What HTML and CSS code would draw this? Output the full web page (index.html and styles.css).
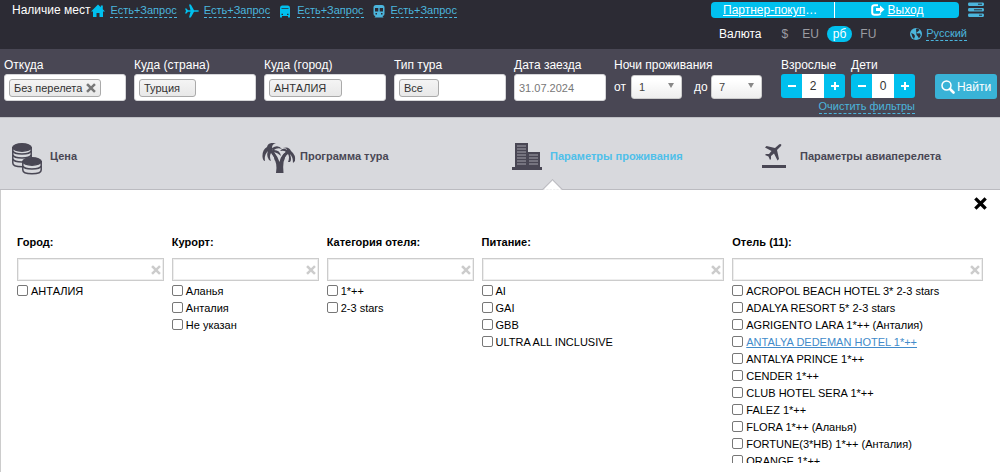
FILE: index.html
```html
<!DOCTYPE html>
<html lang="ru">
<head>
<meta charset="utf-8">
<title>Поиск тура</title>
<link rel="stylesheet" href="styles.css">
</head>
<body>
<svg class="sprite" aria-hidden="true">
  <symbol id="cross" viewBox="0 0 12 12"><path d="M2.300 2.300L9.700 9.700M9.700 2.300L2.300 9.700" fill="none" stroke="currentColor" stroke-width="3" stroke-linecap="square"/></symbol>
</svg>
<header class="topbar">
  <div class="seats">
    <span class="seats-title">Наличие мест</span>
    <span class="seat"><svg class="seat-icon bright" viewBox="0 0 14 14"><path d="M7 0.500L0 7.500H2V13H5.500V9H8.500V13H12V7.500H14L11.800 5.300V1.500H9.800V3.300Z" fill="currentColor"/></svg><a class="dashed" href="#">Есть+Запрос</a></span>
    <span class="seat"><svg class="seat-icon bright" viewBox="0 0 14 14"><path d="M0 4.500H1.500L3 6.200H5.500L4 0.500H5.800L9 6.200H12.500Q14 6.400 14 7Q14 7.600 12.500 7.800H9L5.800 13.500H4L5.500 7.800H3L1.500 9.500H0L1 7Z" fill="currentColor"/></svg><a class="dashed" href="#">Есть+Запрос</a></span>
    <span class="seat"><svg class="seat-icon bright" viewBox="0 0 14 14"><path fill-rule="evenodd" d="M4 1.500H10Q12 1.500 12 4V12.500V13.500H10V12H4V13.500H2V12.500V4Q2 1.500 4 1.500ZM3.500 4V4.800H10.500V4ZM3.500 9.700V11H5V9.700ZM9 9.700V11H10.500V9.700Z" fill="currentColor"/></svg><a class="dashed" href="#">Есть+Запрос</a></span>
    <span class="seat"><svg class="seat-icon" viewBox="0 0 14 14"><path fill-rule="evenodd" d="M4 1H10Q12.500 1 12.500 3.500V10Q12.500 12 10.500 12L11.500 13.500H2.500L3.500 12Q1.500 12 1.500 10V3.500Q1.500 1 4 1ZM3 4V7.500H6.300V4ZM7.700 4V7.500H11V4ZM3.500 9V10.500H5V9ZM9 9V10.500H10.500V9Z" fill="currentColor"/></svg><a class="dashed" href="#">Есть+Запрос</a></span>
  </div>
  <div class="account">
    <div class="account-row">
      <nav class="account-bar">
        <a class="account-link partner" href="#">Партнер-покупатель</a>
        <a class="account-link exit" href="#"><svg class="exit-icon" viewBox="0 0 14 12"><path d="M7 1.200H3.500Q1.200 1.200 1.200 3.500V8.500Q1.200 10.800 3.500 10.800H7Q9 10.800 9.500 9.500" fill="none" stroke="currentColor" stroke-width="2"/><path d="M9 1.500L13.500 5.500L9 9.500V7H5V4H9Z" fill="currentColor"/></svg><span>Выход</span></a>
      </nav>
      <button class="menu" type="button" aria-label="Меню"><svg class="menu-icon" viewBox="0 0 18 16"><path d="M2 0.500H16Q17 0.500 17 2.200T16 4H2Q1 4 1 2.200T2 0.500ZM2 6H16Q17 6 17 7.800T16 9.500H2Q1 9.500 1 7.800T2 6ZM2 11.500H16Q17 11.500 17 13.200T16 15H2Q1 15 1 13.200T2 11.500Z" fill="currentColor"/><path d="M11 2.200H15M7 7.800H15M12 13.200H15" stroke="#2c2b34" stroke-width="1"/></svg></button>
    </div>
    <div class="currency-row">
      <span>Валюта</span>
      <div class="currencies">
        <button class="currency" type="button">$</button>
        <button class="currency" type="button">EU</button>
        <button class="currency active" type="button">рб</button>
        <button class="currency" type="button">FU</button>
      </div>
      <div class="language"><svg class="globe" viewBox="0 0 12 12"><circle cx="6" cy="6" r="6" fill="currentColor"/><path d="M6 0.800L8 0.500L9.500 2L8 3.500L6.500 4.500L7.500 5.500L10 5.300L10.800 7.500L9 10.500L7.500 8L6.500 7ZM1.200 5L4 6.200L5 8L4 11L2.500 9Z" fill="#2c2b34"/></svg><a class="dashed" href="#">Русский</a></div>
    </div>
  </div>
</header>

<form class="search">
  <div class="field"><span class="label">Откуда</span><div class="box"><span class="tag">Без перелета<button class="tag-remove" type="button" aria-label="Убрать"><svg class="x-small" viewBox="0 0 12 12"><use href="#cross"/></svg></button></span></div></div>
  <div class="field"><span class="label">Куда (страна)</span><div class="box"><span class="tag fixed">Турция</span></div></div>
  <div class="field"><span class="label">Куда (город)</span><div class="box"><span class="tag fixed">АНТАЛИЯ</span></div></div>
  <div class="field type"><span class="label">Тип тура</span><div class="box"><span class="tag fixed">Все</span></div></div>
  <div class="field date"><label class="label" for="date">Дата заезда</label><input class="box date-input" id="date" type="text" value="31.07.2024"></div>
  <div class="field nights">
    <span class="label">Ночи проживания</span>
    <div class="nights-row">
      <label for="from">от</label><div class="select-wrap"><select class="select" id="from"><option>1</option></select></div>
      <label class="until" for="to">до</label><div class="select-wrap"><select class="select" id="to"><option>7</option></select></div>
    </div>
  </div>
  <div class="people">
    <div class="people-row">
      <div class="field"><label class="label" for="adults">Взрослые</label><div class="stepper"><button class="step minus" type="button" aria-label="Меньше взрослых"></button><input class="count" id="adults" type="text" value="2"><button class="step plus" type="button" aria-label="Больше взрослых"></button></div></div>
      <div class="field"><label class="label" for="kids">Дети</label><div class="stepper"><button class="step minus" type="button" aria-label="Меньше детей"></button><input class="count" id="kids" type="text" value="0"><button class="step plus" type="button" aria-label="Больше детей"></button></div></div>
    </div>
    <a class="dashed clear" href="#">Очистить фильтры</a>
  </div>
  <button class="find" type="submit"><svg class="find-icon" viewBox="0 0 14 14"><circle cx="5.500" cy="5.500" r="4.500" fill="none" stroke="currentColor" stroke-width="1.500"/><path d="M9 9L12.500 12.500" stroke="currentColor" stroke-width="2.600" stroke-linecap="round"/></svg>Найти</button>
</form>

<nav class="tabs">
  <a class="tab" href="#"><svg class="tab-icon" viewBox="0 0 34 32"><g fill="#d8d9dd" stroke="currentColor" stroke-width="1.500"><path d="M0.800 4V20C0.800 25 19.200 25 19.200 20V4"/><path d="M1 8C2 12 18 12 19 8M1 12C2 16 18 16 19 12M1 16C2 20 18 20 19 16" fill="none"/><ellipse cx="10" cy="4.500" rx="9.200" ry="3.700" fill="currentColor"/><path d="M10.800 18V27C10.800 32 29.200 32 29.200 27V18"/><path d="M11 23C12 27 28 27 29 23" fill="none"/><ellipse cx="20" cy="18.500" rx="9.200" ry="3.700" fill="currentColor"/></g></svg><span>Цена</span></a>
  <a class="tab" href="#"><svg class="tab-icon" viewBox="0 0 34 32"><g fill="currentColor"><path d="M14 30Q16 21 10 10L12 9Q16 14 17.500 19Q18.500 13 24 9L25.500 10Q20 17 21.500 30Z"/><path d="M11 8Q8 2 14 0Q6 -1 5 4Q0 7 0.500 14Q1 18 3 18Q2 12 6 8Q4 13 7 17L9 18Q7 13 9 10Q12 13 13 18Q15 14 12 9Q16 10 19 13Q18 7 12 7Q15 4 20 6Q16 1 10 5Z"/><path d="M24 9Q22 7 18 8Q21 4 25 7Q25 5 21 5Q27 3 29 8Q34 12 33 18L31 20Q31 14 28 11Q30 17 28 19L26 19Q28 14 26 11Q22 14 22 18L20 15Q20 11 24 9Z"/></g></svg><span>Программа тура</span></a>
  <a class="tab active" href="#"><svg class="tab-icon" viewBox="0 0 34 32"><path d="M3 0H16V9H28V24H30V27H0V24H3Z" fill="currentColor"/><path d="M5 3H14M5 6H14M5 9H14M5 12H14M5 15H14M5 18H14M5 21H14M17 12H26M17 15H26M17 18H26M17 21H26" stroke="#a3a2aa" stroke-width="1"/></svg><span>Параметры проживания</span></a>
  <a class="tab" href="#"><svg class="tab-icon" viewBox="0 0 34 32"><path d="M18 1Q20 1 19 3L15 7L17 16L15.500 17.500L12 10.500L9 13V16L8 17L6.500 13.500L3 12L4 11H7L9.500 8L3 4.500L4.500 3L13 5L17 1.500Z" fill="currentColor"/><path d="M0 22H24V25H0Z" fill="currentColor"/></svg><span>Параметры авиаперелета</span></a>
</nav>

<main class="panel">
  <button class="close" type="button" aria-label="Закрыть"><svg class="close-icon" viewBox="0 0 12 12"><use href="#cross"/></svg></button>
  <div class="filters">
    <section class="filter">
      <label class="filter-title" for="city">Город:</label>
      <div class="filter-box"><input class="filter-input" id="city" type="text"><button class="reset" type="button" aria-label="Очистить"><svg class="x-small" viewBox="0 0 12 12"><use href="#cross"/></svg></button></div>
      <div class="options"><label class="option"><input class="tick" type="checkbox">АНТАЛИЯ</label></div>
    </section>
    <section class="filter">
      <label class="filter-title" for="resort">Курорт:</label>
      <div class="filter-box"><input class="filter-input" id="resort" type="text"><button class="reset" type="button" aria-label="Очистить"><svg class="x-small" viewBox="0 0 12 12"><use href="#cross"/></svg></button></div>
      <div class="options">
        <label class="option"><input class="tick" type="checkbox">Аланья</label>
        <label class="option"><input class="tick" type="checkbox">Анталия</label>
        <label class="option"><input class="tick" type="checkbox">Не указан</label>
      </div>
    </section>
    <section class="filter">
      <label class="filter-title" for="category">Категория отеля:</label>
      <div class="filter-box"><input class="filter-input" id="category" type="text"><button class="reset" type="button" aria-label="Очистить"><svg class="x-small" viewBox="0 0 12 12"><use href="#cross"/></svg></button></div>
      <div class="options">
        <label class="option"><input class="tick" type="checkbox">1*++</label>
        <label class="option"><input class="tick" type="checkbox">2-3 stars</label>
      </div>
    </section>
    <section class="filter">
      <label class="filter-title" for="meal">Питание:</label>
      <div class="filter-box"><input class="filter-input" id="meal" type="text"><button class="reset" type="button" aria-label="Очистить"><svg class="x-small" viewBox="0 0 12 12"><use href="#cross"/></svg></button></div>
      <div class="options">
        <label class="option"><input class="tick" type="checkbox">AI</label>
        <label class="option"><input class="tick" type="checkbox">GAI</label>
        <label class="option"><input class="tick" type="checkbox">GBB</label>
        <label class="option"><input class="tick" type="checkbox">ULTRA ALL INCLUSIVE</label>
      </div>
    </section>
    <section class="filter">
      <label class="filter-title" for="hotel">Отель (11):</label>
      <div class="filter-box"><input class="filter-input" id="hotel" type="text"><button class="reset" type="button" aria-label="Очистить"><svg class="x-small" viewBox="0 0 12 12"><use href="#cross"/></svg></button></div>
      <div class="options hotels">
        <label class="option"><input class="tick" type="checkbox">ACROPOL BEACH HOTEL 3* 2-3 stars</label>
        <label class="option"><input class="tick" type="checkbox">ADALYA RESORT 5* 2-3 stars</label>
        <label class="option"><input class="tick" type="checkbox">AGRIGENTO LARA 1*++ (Анталия)</label>
        <div class="option"><input class="tick" type="checkbox" aria-labelledby="dedeman"><a class="hotel-link" id="dedeman" href="#">ANTALYA DEDEMAN HOTEL 1*++</a></div>
        <label class="option"><input class="tick" type="checkbox">ANTALYA PRINCE 1*++</label>
        <label class="option"><input class="tick" type="checkbox">CENDER 1*++</label>
        <label class="option"><input class="tick" type="checkbox">CLUB HOTEL SERA 1*++</label>
        <label class="option"><input class="tick" type="checkbox">FALEZ 1*++</label>
        <label class="option"><input class="tick" type="checkbox">FLORA 1*++ (Аланья)</label>
        <label class="option"><input class="tick" type="checkbox">FORTUNE(3*HB) 1*++ (Анталия)</label>
        <label class="option"><input class="tick" type="checkbox">ORANGE 1*++</label>
      </div>
    </section>
  </div>
</main>
</body>
</html>
```

FILE: styles.css
```css
* { box-sizing: border-box; }
body {
  margin: 0;
  background: #fff;
  color: #000;
  font: 11px/16px "Liberation Sans", Arial, sans-serif;
}
button, input, select { font: inherit; color: inherit; margin: 0; padding: 0; }
button { border: 0; background: none; cursor: pointer; }
svg { display: block; flex: none; }
.sprite { position: absolute; width: 0; height: 0; }

.dashed {
  color: #4bb5dc;
  font-size: 11px;
  line-height: 13px;
  text-decoration: none;
  border-bottom: 1px dashed currentColor;
}

.topbar {
  display: flex;
  justify-content: space-between;
  min-height: 49px;
  padding: 2px 15px 0 12px;
  background: #2c2b34;
  color: #fff;
  font-size: 12px;
}
.seats { display: flex; align-items: flex-start; }
.seats-title { margin-right: 1px; }
.seat { display: flex; align-items: center; gap: 5px; height: 17px; margin-right: 8px; color: #4bb5dc; }
.seat-icon { width: 14px; height: 14px; }
.bright { color: #00c0ee; }
.account { width: 274px; }
.account-row { display: flex; justify-content: space-between; align-items: center; }
.account-bar {
  display: grid;
  grid-template-columns: 1fr 1fr;
  width: 248px;
  height: 16px;
  border-radius: 4px;
  background: #00c0ee;
}
.account-link { color: #fff; min-width: 0; }
.partner { padding: 0 16px 0 12px; overflow: hidden; text-overflow: ellipsis; white-space: nowrap; border-right: 1px solid #fff; }
.exit { display: flex; align-items: center; justify-content: center; gap: 3px; }
.exit-icon { width: 14px; height: 12px; }
.menu { color: #4bb5dc; }
.menu-icon { width: 18px; height: 16px; }
.currency-row { display: flex; align-items: center; padding: 8px 18px 0 8px; }
.currencies { display: flex; gap: 2px; margin-left: 14px; }
.currency { height: 16px; padding: 0 6px; border-radius: 8px; color: #9c9ca2; }
.currency.active { background: #00c0ee; color: #fff; }
.language { display: flex; align-items: center; gap: 4px; margin-left: auto; color: #4bb5dc; }
.globe { width: 12px; height: 12px; }

.search {
  display: flex;
  align-items: flex-start;
  gap: 8px;
  min-height: 68px;
  padding: 8px 3px 0 4px;
  background: #494754;
  color: #fff;
}
.field { flex: 122 1 0; min-width: 0; }
.type { flex-grow: 112; }
.date { flex-grow: 92; }
.nights { flex-grow: 148; }
.label { display: block; height: 17px; font-size: 12px; white-space: nowrap; }
.box { display: flex; align-items: center; width: 100%; height: 27px; padding: 0 4px; border: 1px solid #d5d5d8; border-radius: 3px; background: #fff; }
.tag {
  display: flex;
  align-items: center;
  gap: 4px;
  height: 18px;
  padding: 0 4px;
  border: 1px solid #aaa;
  border-radius: 3px;
  background: linear-gradient(#f4f4f4, #e8e8e8);
  color: #333;
  white-space: nowrap;
}
.fixed { padding-right: 15px; }
.tag-remove { color: #777; }
.x-small { width: 10px; height: 10px; }
.date-input { color: #777; }
.nights-row { display: flex; align-items: center; height: 25px; font-size: 12px; }
.nights-row label { width: 17px; flex: none; }
.nights-row .until { margin-left: 12px; }
.select-wrap { position: relative; flex: 1; }
.select-wrap::after { content: ""; position: absolute; right: 8px; top: 8px; border: 3px solid transparent; border-top: 5px solid #888; border-bottom: 0; pointer-events: none; }
.select { display: block; appearance: none; width: 100%; height: 24px; padding-left: 7px; border: 1px solid #ccc; border-radius: 3px; background: linear-gradient(#fff 20%, #eee); color: #444; font-size: 11px; }
.people { display: flex; flex-direction: column; align-items: flex-end; margin-left: 11px; }
.people-row { display: flex; gap: 6px; }
.people .field { flex: none; width: 64px; }
.clear { margin-top: 2px; }
.stepper { display: grid; grid-template-columns: 1fr 22px 1fr; height: 24px; border-radius: 3px; overflow: hidden; }
.step { display: flex; align-items: center; justify-content: center; background: #00c0ee; }
.step::before { content: ""; width: 8px; height: 8px; background: linear-gradient(#fff, #fff) center / 8px 2px no-repeat; }
.step.plus::before { background: linear-gradient(#fff, #fff) center / 8px 2px no-repeat, linear-gradient(#fff, #fff) center / 2px 8px no-repeat; }
.count { width: 100%; border: 0; background: #fff; color: #333; font-size: 12px; text-align: center; }
.find { display: flex; align-items: center; justify-content: center; gap: 2px; width: 62px; height: 25px; margin: 17px 0 0 12px; border-radius: 3px; background: #39b3d7; font-size: 12px; }
.find-icon { width: 14px; height: 14px; }

.tabs { display: grid; grid-template-columns: repeat(4, 1fr); border-top: 1px solid #bfc0c5; border-bottom: 1px solid #bbbbc0; background: #d8d9dd; }
.tab { position: relative; display: flex; align-items: flex-start; gap: 4px; height: 71px; padding: 25px 0 0 12px; color: #494754; font-weight: 700; text-decoration: none; }
.tab span { padding-top: 5px; white-space: nowrap; }
.tab-icon { width: 34px; height: 32px; }
.tab.active span { color: #4fc0ea; }
.tab.active::after { content: ""; position: absolute; left: 45px; bottom: -8px; width: 13px; height: 13px; border: 1px solid #bbbbc0; border-right-color: transparent; border-bottom-color: transparent; background: linear-gradient(135deg, #fff 50%, transparent 50%); transform: rotate(45deg); }

.panel { display: flex; flex-direction: column; padding: 7px 17px 9px 16px; border-left: 1px solid #ccc; }
.close { align-self: flex-end; margin-right: -4px; }
.close-icon { width: 13px; height: 13px; }
.filters { display: grid; grid-template-columns: 147fr 147fr 147fr 243fr 251fr; gap: 8px; padding-top: 24px; }
.filter { min-width: 0; }
.filter-title { display: block; margin-bottom: 8px; font-weight: 700; }
.filter-box { display: flex; align-items: center; height: 23px; padding-right: 2px; border: 1px solid #ccc; box-shadow: inset 0 0 0 1px #eee; }
.filter-input { flex: 1; min-width: 0; height: 100%; border: 0; background: none; outline: 0; }
.reset { color: #ccc; }
.options { padding-top: 1px; }
.hotels { height: 182px; overflow: hidden; }
.option { display: flex; align-items: center; gap: 3px; height: 17px; white-space: nowrap; }
.tick { appearance: none; flex: none; width: 11px; height: 11px; border: 1px solid #777; border-radius: 2px; background: #fff; }
.hotel-link { color: #428bca; }
```
